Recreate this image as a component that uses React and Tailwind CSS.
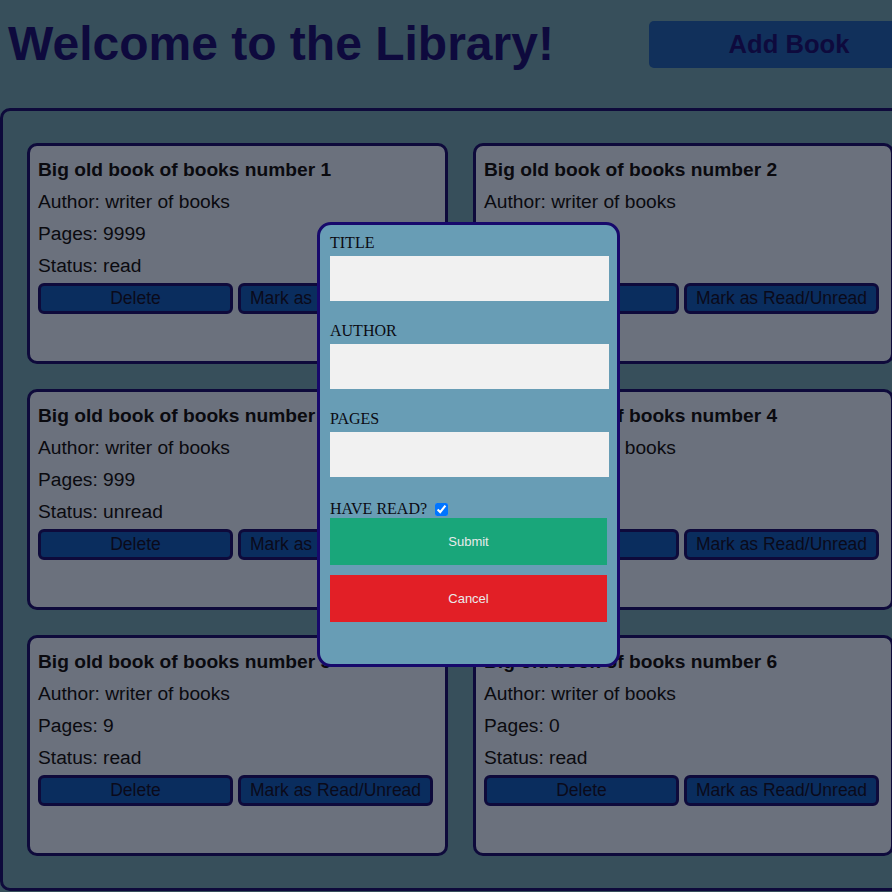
import React from 'react';

const books = [
  { title: 'Big old book of books number 1', author: 'writer of books', pages: 9999, read: true },
  { title: 'Big old book of books number 2', author: 'writer of books', pages: 99999, read: true },
  { title: 'Big old book of books number 3', author: 'writer of books', pages: 999, read: false },
  { title: 'Big old book of books number 4', author: 'writer of books', pages: 99, read: false },
  { title: 'Big old book of books number 5', author: 'writer of books', pages: 9, read: true },
  { title: 'Big old book of books number 6', author: 'writer of books', pages: 0, read: true },
];

function BookCard({ book }) {
  return (
    <div className="h-[221px] rounded-[10px] border-[3px] border-[#0e0a3b] bg-[#6b717d] px-2 pt-[8px] text-[19.2px] text-[#0a0a0f]">
      <div className="flex h-8 items-center font-bold">{book.title}</div>
      <div className="flex h-8 items-center">Author: {book.author}</div>
      <div className="flex h-8 items-center">Pages: {book.pages}</div>
      <div className="flex h-8 items-center">Status: {book.read ? 'read' : 'unread'}</div>
      <div className="mt-[1px] flex gap-[5px]">
        <button className="h-[31px] w-[195px] rounded-[6px] border-[3px] border-[#0e0a3b] bg-[#0a2d5e] text-[17.5px] leading-none text-[#0a0a1a]">Delete</button>
        <button className="h-[31px] w-[195px] rounded-[6px] border-[3px] border-[#0e0a3b] bg-[#0a2d5e] text-[17.5px] leading-none text-[#0a0a1a]">Mark as Read/Unread</button>
      </div>
    </div>
  );
}

function Field({ label, first }) {
  return (
    <div className={first ? '' : 'mt-5'}>
      <label className="block h-[18px] text-[16px] leading-[20px] text-[#0b0b12]">{label}</label>
      <input className="mt-[5px] block h-[45px] w-[279px] bg-[#f1f1f1] outline-none" />
    </div>
  );
}

export default function App() {
  return (
    <div className="relative h-[892px] w-[892px] overflow-hidden bg-[#374f5b] font-['Liberation_Sans',Arial,sans-serif]">
      <div className="grid h-[108px] grid-cols-[641px_280px] items-center pb-5 pl-2">
        <h1 className="text-[48px] font-bold leading-none text-[#0e0a3d]">Welcome to the Library!</h1>
        <button className="h-[47px] rounded-[5px] bg-[#11305b] text-[25.6px] font-bold text-[#0e0a3d]">Add Book</button>
      </div>

      <div className="w-[940px] rounded-[10px] border-[3px] border-[#0e0a3b] px-6 pb-8 pt-8">
        <div className="grid grid-cols-[421px_421px] gap-[25px]">
          {books.map((b) => (
            <BookCard key={b.title} book={b} />
          ))}
        </div>
      </div>

      <div className="absolute left-[317px] top-[222px] h-[445px] w-[303px] rounded-[14px] border-[3px] border-[#17096b] bg-[#689db5] px-[10px] pt-2 font-['Liberation_Serif','Times_New_Roman',serif]">
        <Field label="TITLE" first />
        <Field label="AUTHOR" />
        <Field label="PAGES" />
        <div className="mt-[23px] flex h-[18px] items-center text-[16px] leading-[18px] text-[#0b0b12]">
          HAVE READ?
          <input type="checkbox" defaultChecked className="ml-[8px] h-[13px] w-[13px]" />
        </div>
        <button className="block h-[47px] w-[277px] bg-[#19a67a] font-['Liberation_Sans',Arial,sans-serif] text-[13px] text-[#eaeaea]">Submit</button>
        <button className="mt-[10px] block h-[47px] w-[277px] bg-[#e21f26] font-['Liberation_Sans',Arial,sans-serif] text-[13px] text-[#eaeaea]">Cancel</button>
      </div>
    </div>
  );
}
